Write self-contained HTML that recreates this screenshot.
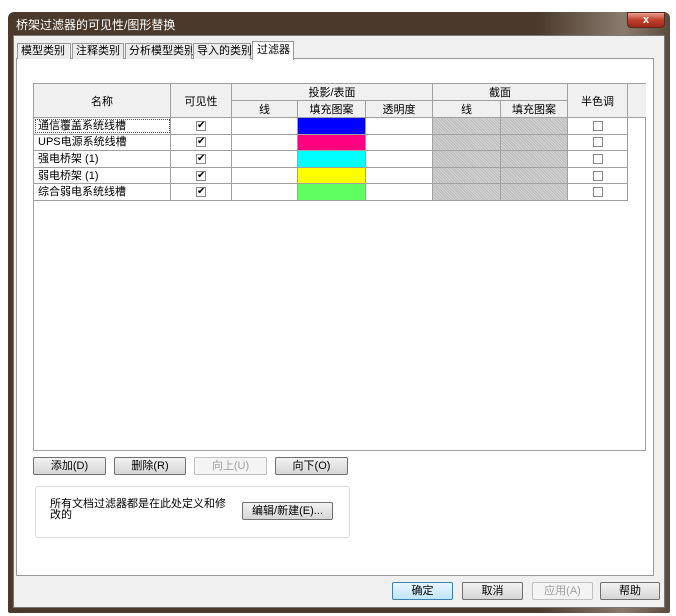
<!DOCTYPE html><html><head><meta charset="utf-8"><style>
*{margin:0;padding:0;box-sizing:border-box}
body{width:676px;height:616px;background:#fff;position:relative;overflow:hidden;font-family:"Liberation Sans","Noto Sans CJK SC",sans-serif;font-size:11px;color:#000}
.a{position:absolute;white-space:nowrap}
.btn{position:absolute;height:18px;border:1px solid #707070;border-radius:2px;background:linear-gradient(#f2f2f2,#e4e4e4 50%,#d6d6d6);text-align:center;line-height:16px;font-size:11px}
.dis{color:#a0a0a0;border-color:#c0c0c0;background:#f4f4f4}
table{border-collapse:collapse;position:absolute;left:33px;top:83px;table-layout:fixed}
td{border:1px solid #a0a0a0;height:16.6px;padding:0;font-size:11px;line-height:14px;white-space:nowrap}
th{border:1px solid #a0a0a0;background:#f0f0f0;font-weight:normal;font-size:11px;height:17px;padding:0}
.cb{display:inline-block;width:10px;height:10px;border:1px solid #888;background:#fff;vertical-align:middle;font-size:10px;line-height:8px;text-align:center}
.g{background:#c8c8c8;background-image:repeating-linear-gradient(45deg,#bbb 0 1px,#d4d4d4 1px 2px)}
.tab{position:absolute;top:43px;height:16px;border:1px solid #999;border-bottom:none;background:#ececec;padding:0 3px;line-height:14px;white-space:nowrap}
</style></head><body>
<div class="a" style="left:8px;top:12px;width:662px;height:601px;border-radius:6px 6px 2px 2px;background:linear-gradient(90deg,#4b3a2c 0,#4b3a2c 80%,#8a7b6e 93%,#5a4a3c 100%)"></div>
<div class="a" style="left:16px;top:16px;color:#fff;font-size:12px">桥架过滤器的可见性/图形替换</div>
<div class="a" style="left:627px;top:12px;width:38px;height:16px;background:linear-gradient(#e8a090,#c0402c 50%,#a02818);border:1px solid #5a2a20;border-radius:0 0 4px 4px;color:#fff;text-align:center;font-weight:bold;font-size:11px;line-height:14px">x</div>
<div class="a" style="left:13px;top:35px;width:652px;height:573px;background:#f0f0f0;border:1px solid #777"></div>
<div class="a" style="left:16px;top:58px;width:638px;height:518px;background:#fff;border:1px solid #999"></div>
<div class="tab" style="left:17px;width:54px">模型类别</div>
<div class="tab" style="left:72px;width:52px">注释类别</div>
<div class="tab" style="left:125px;width:67px">分析模型类别</div>
<div class="tab" style="left:193px;width:58px">导入的类别</div>
<div class="tab" style="left:252px;top:41px;width:42px;height:19px;background:#fff;padding:0 4px;line-height:16px">过滤器</div>
<div class="a" style="left:33px;top:83px;width:613px;height:368px;border:1px solid #a0a0a0;background:#fff"></div>
<table>
<colgroup><col style="width:137px"><col style="width:61px"><col style="width:66px"><col style="width:68px"><col style="width:67px"><col style="width:68px"><col style="width:67px"><col style="width:60px"><col style="width:18px"></colgroup>
<tr><th rowspan=2>名称</th><th rowspan=2>可见性</th><th colspan=3>投影/表面</th><th colspan=2>截面</th><th rowspan=2>半色调</th><th rowspan=2 style="border-right:none"></th></tr>
<tr><th>线</th><th>填充图案</th><th>透明度</th><th>线</th><th>填充图案</th></tr>
<tr><td style="padding-left:4px;outline:1px dotted #555;outline-offset:-2px">通信覆盖系统线槽</td><td align=center><span class="cb">✔</span></td><td></td><td style="background:#0000ff"></td><td></td><td class="g"></td><td class="g"></td><td align=center><span class="cb"></span></td><td style="border:none"></td></tr>
<tr><td style="padding-left:4px">UPS电源系统线槽</td><td align=center><span class="cb">✔</span></td><td></td><td style="background:#ff0080"></td><td></td><td class="g"></td><td class="g"></td><td align=center><span class="cb"></span></td><td style="border:none"></td></tr>
<tr><td style="padding-left:4px">强电桥架 (1)</td><td align=center><span class="cb">✔</span></td><td></td><td style="background:#00ffff"></td><td></td><td class="g"></td><td class="g"></td><td align=center><span class="cb"></span></td><td style="border:none"></td></tr>
<tr><td style="padding-left:4px">弱电桥架 (1)</td><td align=center><span class="cb">✔</span></td><td></td><td style="background:#ffff00"></td><td></td><td class="g"></td><td class="g"></td><td align=center><span class="cb"></span></td><td style="border:none"></td></tr>
<tr><td style="padding-left:4px">综合弱电系统线槽</td><td align=center><span class="cb">✔</span></td><td></td><td style="background:#60ff60"></td><td></td><td class="g"></td><td class="g"></td><td align=center><span class="cb"></span></td><td style="border:none"></td></tr>
</table>
<div class="btn" style="left:33px;top:457px;width:73px">添加(D)</div>
<div class="btn" style="left:114px;top:457px;width:72px">删除(R)</div>
<div class="btn dis" style="left:194px;top:457px;width:73px">向上(U)</div>
<div class="btn" style="left:275px;top:457px;width:73px">向下(O)</div>
<div class="a" style="left:35px;top:486px;width:315px;height:52px;border:1px solid #dcdcdc;border-radius:3px"></div>
<div class="a" style="left:50px;top:499px;line-height:11px">所有文档过滤器都是在此处定义和修<br>改的</div>
<div class="btn" style="left:242px;top:502px;width:91px">编辑/新建(E)...</div>
<div class="btn" style="left:392px;top:582px;width:61px;border-color:#3c7fb1;background:linear-gradient(#eaf6fd,#bee6fd)">确定</div>
<div class="btn" style="left:462px;top:582px;width:61px">取消</div>
<div class="btn dis" style="left:532px;top:582px;width:61px">应用(A)</div>
<div class="btn" style="left:600px;top:582px;width:60px">帮助</div>
</body></html>
